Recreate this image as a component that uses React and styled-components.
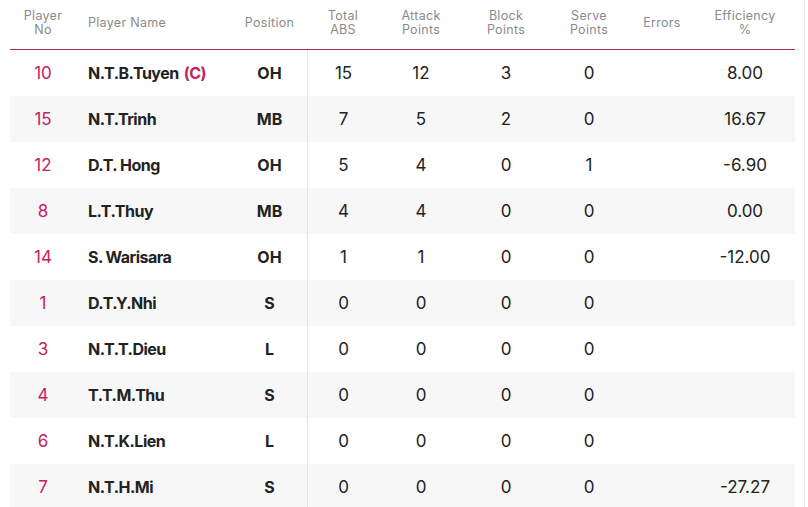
import React from "react";
import styled, { createGlobalStyle } from "styled-components";

const GlobalStyle = createGlobalStyle`
  body {
    margin: 0;
    background: #fff;
    font-family: Inter, "Liberation Sans", sans-serif;
  }
`;

const cols = "66px 156px 75px 72px 84px 86px 80px 66px 100px";

const Wrapper = styled.div`
  width: 805px;
  height: 507px;
  overflow: hidden;
  border-right: 1px solid #ececec;
  box-sizing: border-box;
  padding-left: 10px;
`;

const Table = styled.div`
  width: 785px;
`;

const HeadRow = styled.div`
  display: grid;
  grid-template-columns: ${cols};
  height: 50px;
  align-items: center;
  border-bottom: 1.5px solid #a92a5b;
  box-sizing: border-box;
`;

const HeadCell = styled.div`
  color: #8a8a8a;
  font-size: 12.5px;
  line-height: 14px;
  letter-spacing: 0.3px;
  text-align: ${(p) => (p.left ? "left" : "center")};
  padding-left: ${(p) => (p.left ? "12px" : "0")};
  padding-bottom: 4px;
`;

const Row = styled.div`
  display: grid;
  grid-template-columns: ${cols};
  height: 46px;
  align-items: stretch;
  background: ${(p) => (p.striped ? "#f7f7f7" : "#fff")};
`;

const Cell = styled.div`
  display: flex;
  align-items: center;
  justify-content: center;
  font-size: 17px;
  color: #222;
  border-left: ${(p) => (p.divider ? "1px solid #e6e6e6" : "none")};
`;

const NoCell = styled(Cell)`
  color: #c8215d;
`;

const NameCell = styled(Cell)`
  justify-content: flex-start;
  padding-left: 12px;
  font-weight: 700;
  font-size: 16px;
  letter-spacing: -0.5px;
`;

const PosCell = styled(Cell)`
  font-weight: 700;
  font-size: 16px;
`;

const Captain = styled.span`
  color: #c8215d;
  margin-left: 5px;
`;

const players = [
  ["10", "N.T.B.Tuyen", "OH", 15, 12, 3, 0, "", "8.00", true],
  ["15", "N.T.Trinh", "MB", 7, 5, 2, 0, "", "16.67"],
  ["12", "D.T. Hong", "OH", 5, 4, 0, 1, "", "-6.90"],
  ["8", "L.T.Thuy", "MB", 4, 4, 0, 0, "", "0.00"],
  ["14", "S. Warisara", "OH", 1, 1, 0, 0, "", "-12.00"],
  ["1", "D.T.Y.Nhi", "S", 0, 0, 0, 0, "", ""],
  ["3", "N.T.T.Dieu", "L", 0, 0, 0, 0, "", ""],
  ["4", "T.T.M.Thu", "S", 0, 0, 0, 0, "", ""],
  ["6", "N.T.K.Lien", "L", 0, 0, 0, 0, "", ""],
  ["7", "N.T.H.Mi", "S", 0, 0, 0, 0, "", "-27.27"],
];

export default function App() {
  return (
    <>
      <GlobalStyle />
      <Wrapper>
        <Table>
          <HeadRow>
            <HeadCell>Player<br />No</HeadCell>
            <HeadCell left>Player Name</HeadCell>
            <HeadCell>Position</HeadCell>
            <HeadCell>Total<br />ABS</HeadCell>
            <HeadCell>Attack<br />Points</HeadCell>
            <HeadCell>Block<br />Points</HeadCell>
            <HeadCell>Serve<br />Points</HeadCell>
            <HeadCell>Errors</HeadCell>
            <HeadCell>Efficiency<br />%</HeadCell>
          </HeadRow>
          {players.map((p, i) => (
            <Row key={p[0]} striped={i % 2 === 1}>
              <NoCell>{p[0]}</NoCell>
              <NameCell>
                {p[1]}
                {p[9] && <Captain>(C)</Captain>}
              </NameCell>
              <PosCell>{p[2]}</PosCell>
              <Cell divider>{p[3]}</Cell>
              <Cell>{p[4]}</Cell>
              <Cell>{p[5]}</Cell>
              <Cell>{p[6]}</Cell>
              <Cell>{p[7]}</Cell>
              <Cell>{p[8]}</Cell>
            </Row>
          ))}
        </Table>
      </Wrapper>
    </>
  );
}
